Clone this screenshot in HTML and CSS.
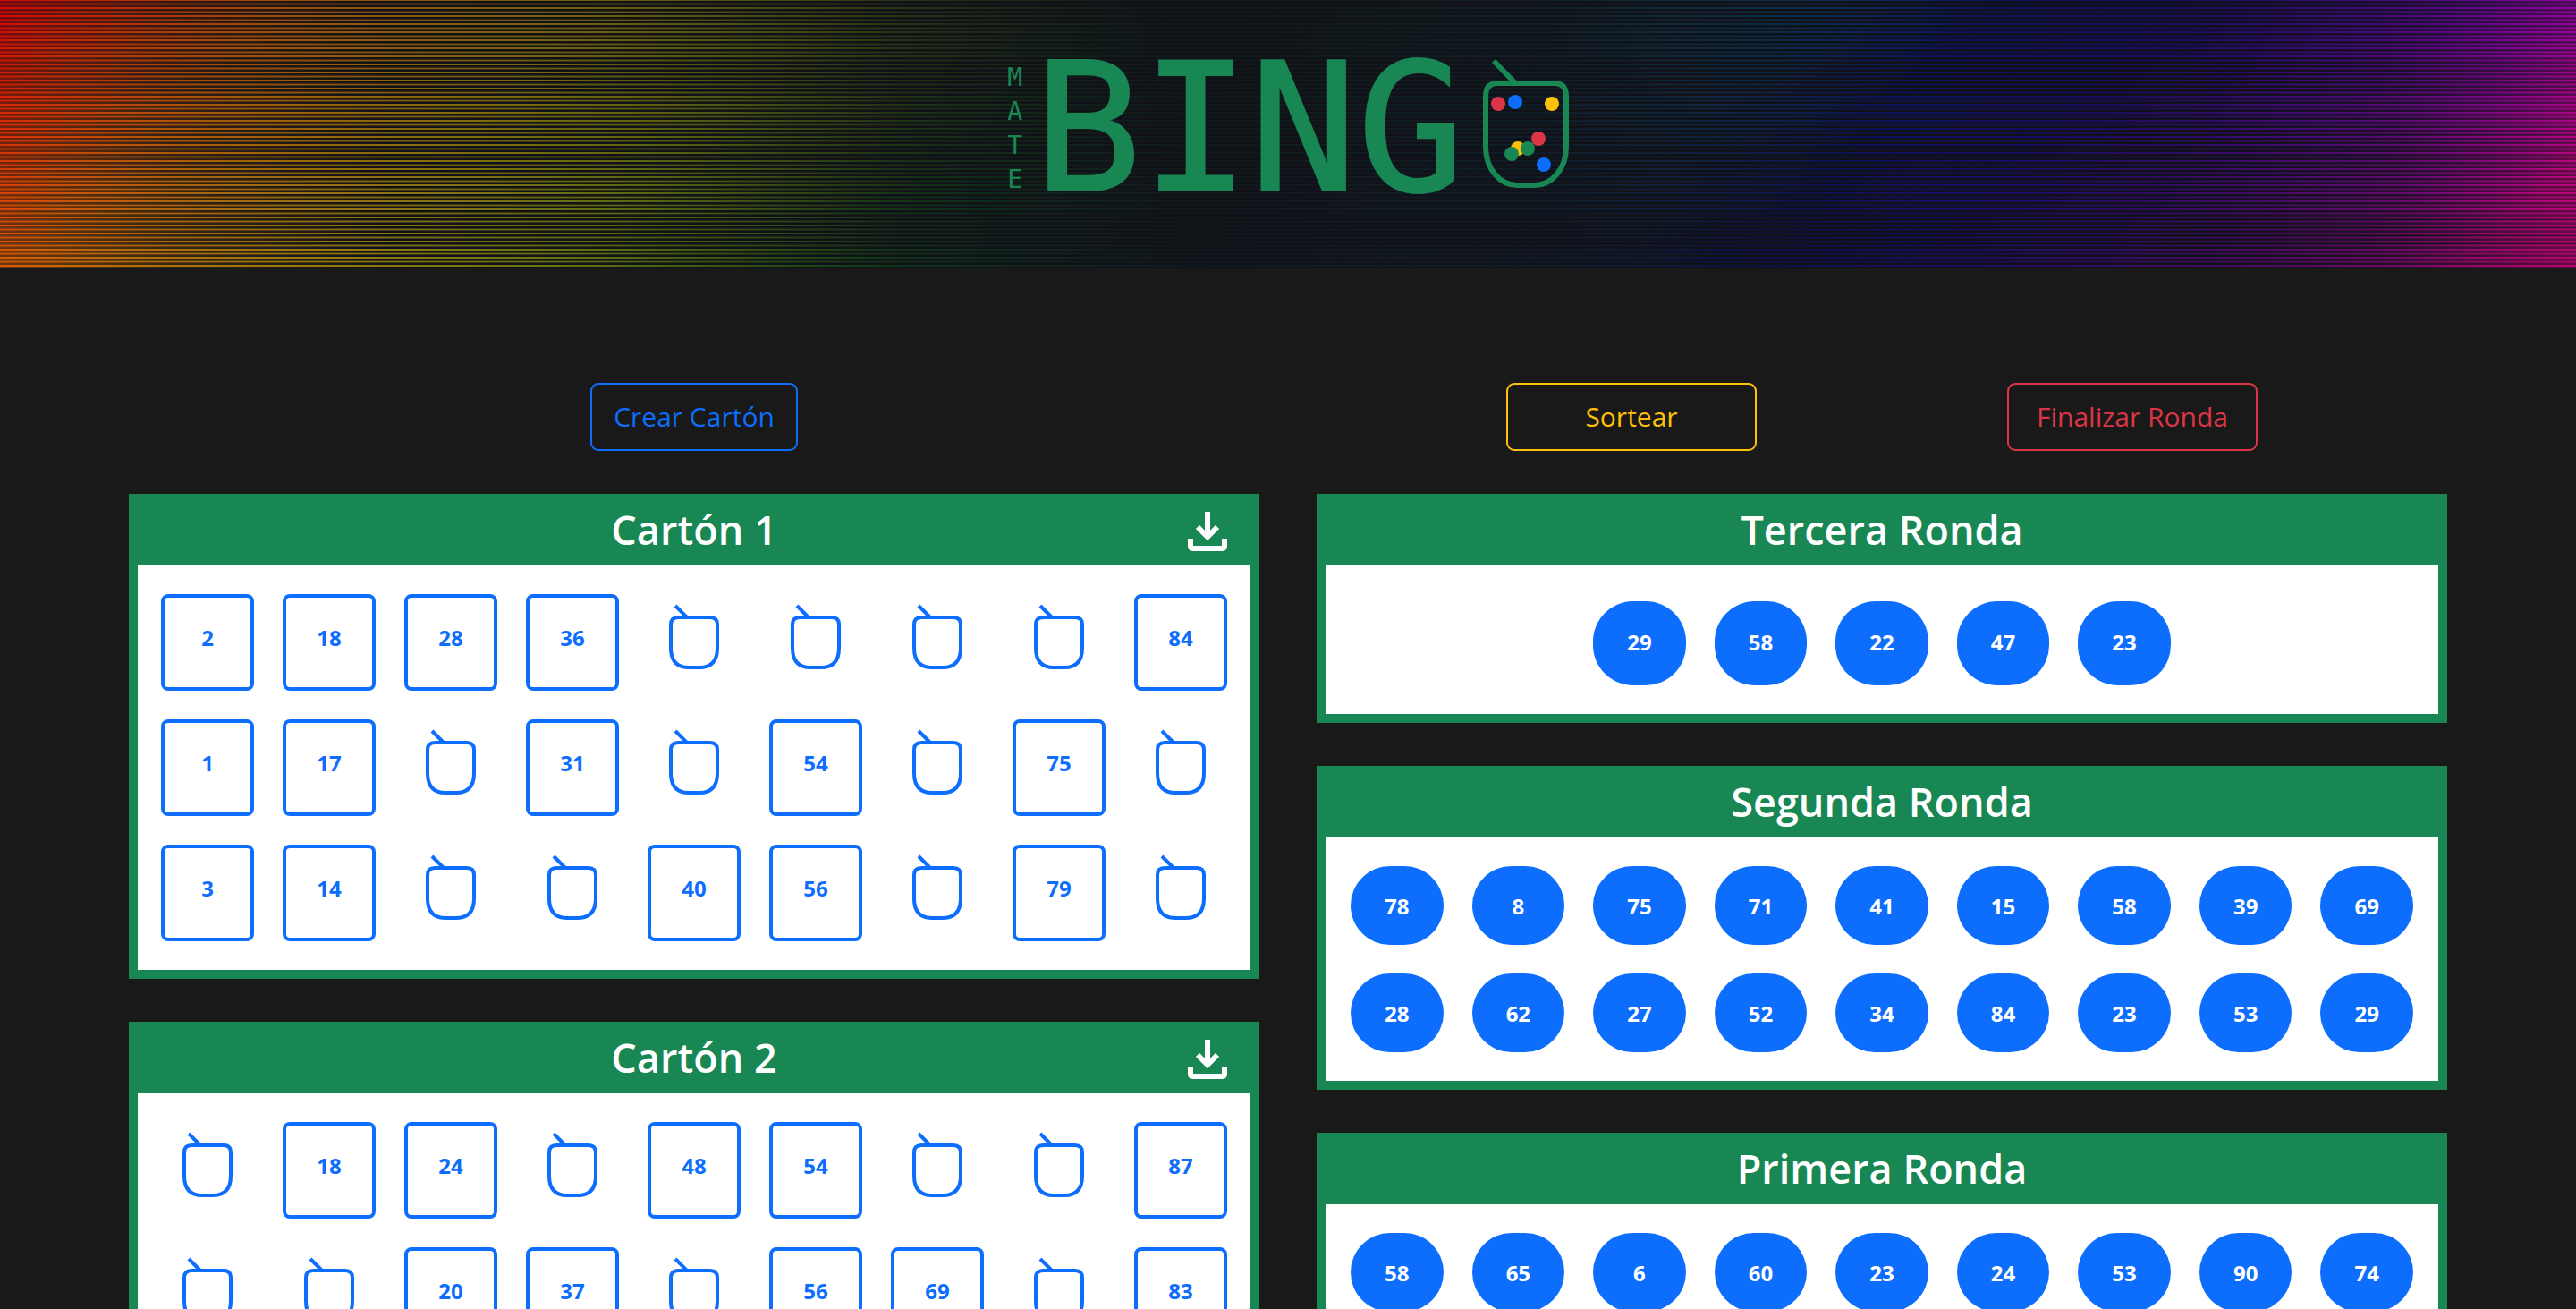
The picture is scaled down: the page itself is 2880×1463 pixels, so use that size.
FILE: index.html
```html
<!DOCTYPE html>
<html lang="es">
<head>
<meta charset="utf-8">
<meta name="viewport" content="width=device-width, initial-scale=1">
<title>Mate Bingo</title>
<link rel="stylesheet" href="styles.css">
</head>
<body>
<svg class="symbols" aria-hidden="true">
  <symbol id="mate" viewBox="0 0 56 74">
    <path d="M7 3L20 16" fill="none" stroke="currentColor" stroke-width="4"/>
    <path d="M10 16H46Q54 16 54 24V50Q54 72 34 72H22Q2 72 2 50V24Q2 16 10 16Z" fill="none" stroke="currentColor" stroke-width="4"/>
  </symbol>
  <symbol id="download" viewBox="0 0 44 44">
    <path d="M22 0V27M11 17L22 28L33 17M3 30V38Q3 41 6 41H38Q41 41 41 38V30" fill="none" stroke="currentColor" stroke-width="6"/>
  </symbol>
</svg>

<header class="banner">
  <h1 class="logo">
    <span class="logo-mate"><span>M</span><span>A</span><span>T</span><span>E</span></span>
    <span class="logo-bingo">BING</span>
    <svg class="logo-jar" viewBox="0 0 96 146" role="img" aria-label="O">
      <g fill="none" stroke="#198754">
        <path d="M12 4L37 30" stroke-width="6"/>
        <path d="M16 29H80Q93 29 93 44V100C93 126 76 143 58 143H38C20 143 3 126 3 100V44Q3 29 16 29Z" stroke-width="6"/>
      </g>
      <circle cx="17" cy="52" r="8" fill="#dc3545"/>
      <circle cx="36" cy="50" r="8" fill="#0d6efd"/>
      <circle cx="77" cy="52" r="8" fill="#ffc107"/>
      <circle cx="62" cy="91" r="8" fill="#dc3545"/>
      <circle cx="39" cy="102" r="8" fill="#ffc107"/>
      <circle cx="32" cy="108" r="8" fill="#198754"/>
      <circle cx="50" cy="102" r="8" fill="#198754"/>
      <circle cx="68" cy="120" r="8" fill="#0d6efd"/>
    </svg>
  </h1>
</header>

<main class="board">
  <section class="column">
    <div class="actions">
      <button class="btn btn-primary" type="button">Crear Cartón</button>
    </div>

    <article class="card">
      <header class="card-header">
        <h2>Cartón 1</h2>
        <button class="download" type="button" aria-label="Descargar Cartón 1"><svg><use href="#download"/></svg></button>
      </header>
      <ol class="ticket">
        <li class="cell">2</li><li class="cell">18</li><li class="cell">28</li><li class="cell">36</li><li class="blank"><svg><use href="#mate"/></svg></li><li class="blank"><svg><use href="#mate"/></svg></li><li class="blank"><svg><use href="#mate"/></svg></li><li class="blank"><svg><use href="#mate"/></svg></li><li class="cell">84</li>
        <li class="cell">1</li><li class="cell">17</li><li class="blank"><svg><use href="#mate"/></svg></li><li class="cell">31</li><li class="blank"><svg><use href="#mate"/></svg></li><li class="cell">54</li><li class="blank"><svg><use href="#mate"/></svg></li><li class="cell">75</li><li class="blank"><svg><use href="#mate"/></svg></li>
        <li class="cell">3</li><li class="cell">14</li><li class="blank"><svg><use href="#mate"/></svg></li><li class="blank"><svg><use href="#mate"/></svg></li><li class="cell">40</li><li class="cell">56</li><li class="blank"><svg><use href="#mate"/></svg></li><li class="cell">79</li><li class="blank"><svg><use href="#mate"/></svg></li>
      </ol>
    </article>

    <article class="card">
      <header class="card-header">
        <h2>Cartón 2</h2>
        <button class="download" type="button" aria-label="Descargar Cartón 2"><svg><use href="#download"/></svg></button>
      </header>
      <ol class="ticket">
        <li class="blank"><svg><use href="#mate"/></svg></li><li class="cell">18</li><li class="cell">24</li><li class="blank"><svg><use href="#mate"/></svg></li><li class="cell">48</li><li class="cell">54</li><li class="blank"><svg><use href="#mate"/></svg></li><li class="blank"><svg><use href="#mate"/></svg></li><li class="cell">87</li>
        <li class="blank"><svg><use href="#mate"/></svg></li><li class="blank"><svg><use href="#mate"/></svg></li><li class="cell">20</li><li class="cell">37</li><li class="blank"><svg><use href="#mate"/></svg></li><li class="cell">56</li><li class="cell">69</li><li class="blank"><svg><use href="#mate"/></svg></li><li class="cell">83</li>
      </ol>
    </article>
  </section>

  <section class="column">
    <div class="actions">
      <button class="btn btn-wide btn-warning" type="button">Sortear</button>
      <button class="btn btn-wide btn-danger" type="button">Finalizar Ronda</button>
    </div>

    <article class="card">
      <header class="card-header"><h2>Tercera Ronda</h2></header>
      <ol class="balls balls-current">
        <li>29</li><li>58</li><li>22</li><li>47</li><li>23</li>
      </ol>
    </article>

    <article class="card">
      <header class="card-header"><h2>Segunda Ronda</h2></header>
      <ol class="balls">
        <li>78</li><li>8</li><li>75</li><li>71</li><li>41</li><li>15</li><li>58</li><li>39</li><li>69</li>
        <li>28</li><li>62</li><li>27</li><li>52</li><li>34</li><li>84</li><li>23</li><li>53</li><li>29</li>
      </ol>
    </article>

    <article class="card">
      <header class="card-header"><h2>Primera Ronda</h2></header>
      <ol class="balls">
        <li>58</li><li>65</li><li>6</li><li>60</li><li>23</li><li>24</li><li>53</li><li>90</li><li>74</li>
      </ol>
    </article>
  </section>
</main>
</body>
</html>
```
FILE: styles.css
```css
:root {
  --green: #198754;
  --blue: #0d6efd;
  --yellow: #ffc107;
  --red: #dc3545;
  --ink: 17, 17, 24;
}

* {
  box-sizing: border-box;
}

body {
  margin: 0;
  background: #191919;
  color: #fff;
  font-family: "Open Sans", "Noto Sans", sans-serif;
}

h1,
h2,
ol {
  margin: 0;
  padding: 0;
}

ol {
  list-style: none;
}

.symbols {
  display: none;
}

/* Banner: a diagonal rainbow dimmed towards the middle, under scan lines */
.banner {
  position: relative;
  display: flex;
  justify-content: center;
  padding: 64px 0 0;
  height: 300px;
  background:
    linear-gradient(90deg, rgba(var(--ink), 0.18) 0%, rgba(var(--ink), 0.32) 6%, rgba(var(--ink), 0.46) 14%, rgba(var(--ink), 0.62) 24%, rgba(var(--ink), 0.86) 35%, rgba(var(--ink), 0.97) 46%, rgba(var(--ink), 0.93) 60%, rgba(var(--ink), 0.68) 75%, rgba(var(--ink), 0.66) 85%, rgba(var(--ink), 0.54) 93%, rgba(var(--ink), 0.3) 100%),
    linear-gradient(135deg, #ff0000 0%, #ff7300 10%, #ffd000 21%, #e1ff00 29%, #95ff00 35%, #00ff1e 41%, #00ffa2 50%, #00c8ff 58%, #0084ff 64%, #0015ff 70%, #2600ff 77%, #8000ff 84%, #c800d0 91%, #ff00a8 96%, #ff0090 100%);
}

.banner::before {
  content: "";
  position: absolute;
  inset: 0;
  background: repeating-linear-gradient(180deg, transparent 0 1px, rgb(var(--ink)) 1px 3px, rgba(var(--ink), 0.6) 3px 4px, rgba(var(--ink), 0.1) 4px 5px, rgba(var(--ink), 0.6) 5px 6px, rgb(var(--ink)) 6px 8px, transparent 8px 9px);
  mask-image: linear-gradient(90deg, rgba(0, 0, 0, 0.5) 0%, rgba(0, 0, 0, 0.8) 7%, #000 15%, #000 85%, rgba(0, 0, 0, 0.8) 93%, rgba(0, 0, 0, 0.5) 100%);
}

.logo {
  position: relative;
  display: flex;
  align-items: flex-start;
  color: var(--green);
  font-family: "DejaVu Sans Mono", monospace;
  font-weight: 400;
}

.logo-mate {
  display: flex;
  flex-direction: column;
  padding-top: 4px;
  font-size: 28px;
  line-height: 38px;
}

.logo-bingo {
  margin: 0 20px 0 13px;
  font-size: 200px;
  line-height: 160px;
  -webkit-text-stroke: 2px var(--green);
}

.logo-jar {
  width: 96px;
  height: 146px;
}

/* Board */
.board {
  display: grid;
  grid-template-columns: 1fr 1fr;
  gap: 64px;
  padding: 128px 5%;
}

.column {
  display: flex;
  flex-direction: column;
  gap: 48px;
  min-width: 0;
}

.actions {
  display: flex;
  justify-content: center;
  gap: 280px;
}

.btn {
  height: 76px;
  padding: 0 24px;
  border: 2px solid currentColor;
  border-radius: 9px;
  background: transparent;
  font: 400 30px/44px "Open Sans", "Noto Sans", sans-serif;
}

.btn-wide {
  width: 280px;
}

.btn-primary {
  color: var(--blue);
}

.btn-warning {
  color: var(--yellow);
}

.btn-danger {
  color: var(--red);
}

.card {
  padding: 0 10px 10px;
  background: var(--green);
}

.card-header {
  display: grid;
  grid-template-columns: 1fr auto 1fr;
  align-items: center;
  height: 80px;
  padding: 0 26px;
}

.card-header h2 {
  grid-column: 2;
  font-size: 45px;
  font-weight: 600;
  line-height: 56px;
}

.download {
  justify-self: end;
  width: 44px;
  height: 44px;
  margin-top: 4px;
  padding: 0;
  border: 0;
  background: none;
  color: #fff;
}

.download svg {
  display: block;
  width: 100%;
  height: 100%;
}

.ticket {
  display: grid;
  grid-template-columns: repeat(9, 1fr);
  gap: 32px;
  padding: 32px 26px;
  background: #fff;
  color: var(--blue);
  font-size: 24px;
  font-weight: 700;
}

.cell,
.blank {
  display: flex;
  justify-content: center;
  height: 108px;
}

.cell {
  align-items: center;
  padding-bottom: 12px;
  border: 4px solid currentColor;
  border-radius: 8px;
}

.blank {
  padding-top: 10px;
}

.blank svg {
  width: 56px;
  height: 74px;
}

.balls {
  display: flex;
  flex-wrap: wrap;
  justify-content: center;
  gap: 32px;
  padding: 32px 28px;
  background: #fff;
  font-size: 24px;
  font-weight: 700;
}

.balls li {
  display: flex;
  align-items: center;
  justify-content: center;
  width: calc((100% - 256px) / 9);
  height: 88px;
  border-radius: 45px;
  background: var(--blue);
}

.balls-current {
  padding-top: 40px;
}

.balls-current li {
  height: 94px;
  padding-bottom: 4px;
}
```
